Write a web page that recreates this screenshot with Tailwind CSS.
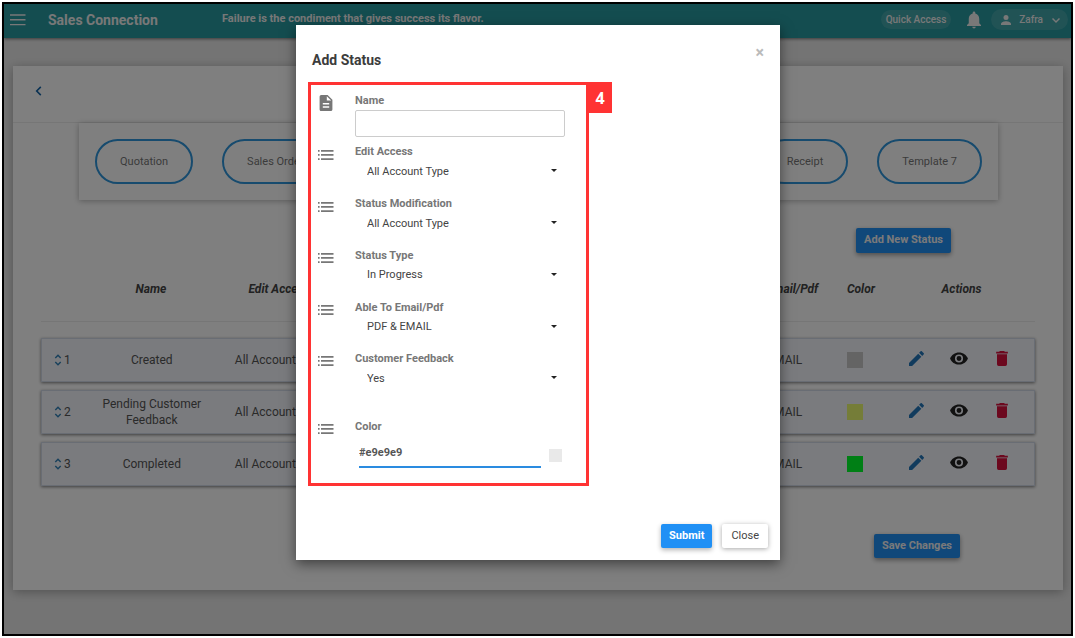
<!DOCTYPE html>
<html lang="en">
<head>
<meta charset="utf-8">
<meta name="viewport" content="width=device-width, initial-scale=1">
<title>Sales Connection</title>
<script src="https://cdn.jsdelivr.net/npm/@tailwindcss/browser@4"></script>
</head>
<body class="bg-white font-[Roboto,sans-serif]">
<svg class="hidden" aria-hidden="true">
  <symbol id="list" viewBox="0 0 16 16"><path fill="currentColor" d="M0 3h1.600v1.700H0zM3 3h12.500v1.700H3zM0 7.100h1.600v1.700H0zM3 7.100h12.500v1.700H3zM0 11.200h1.600v1.700H0zM3 11.200h12.500v1.700H3z"/></symbol>
  <symbol id="caret" viewBox="0 0 6 3"><path fill="currentColor" d="M0 0h6L3 3z"/></symbol>
  <symbol id="sort" viewBox="0 0 8 12"><path fill="none" stroke="currentColor" stroke-width="1.400" d="M1.300 4 4 1.300 6.700 4M1.300 8 4 10.700 6.700 8"/></symbol>
  <symbol id="pencil" viewBox="3 3 18 18"><path fill="currentColor" d="M3 17.250V21h3.750L17.810 9.940l-3.750-3.750L3 17.250zM20.710 7.040a1 1 0 0 0 0-1.410l-2.340-2.340a1 1 0 0 0-1.410 0l-1.830 1.830 3.750 3.750 1.830-1.830z"/></symbol>
  <symbol id="eye" viewBox="1 4 22 16"><path fill="currentColor" d="M12 4.500C7 4.500 2.730 7.610 1 12c1.730 4.390 6 7.500 11 7.500s9.270-3.110 11-7.500c-1.730-4.390-6-7.500-11-7.500zM12 17a5 5 0 1 1 0-10 5 5 0 0 1 0 10zm0-8a3 3 0 1 0 0 6 3 3 0 0 0 0-6z"/></symbol>
  <symbol id="trash" viewBox="5 3 14 18"><path fill="currentColor" d="M6 19a2 2 0 0 0 2 2h8a2 2 0 0 0 2-2V7H6v12zM19 4h-3.500l-1-1h-5l-1 1H5v2h14V4z"/></symbol>
</svg>

<div class="flex min-h-screen p-[2px]">
<div class="relative flex grow flex-col border-2 border-black bg-[#e9e9e9]">

  <header class="flex h-[34px] items-center bg-[#289aa0] pr-[3px] pb-[3px] pl-[6px] text-[#f0f0f0] shadow-[0_1px_3px_rgba(0,0,0,0.5)]">
    <button type="button" aria-label="Menu"><svg class="block h-4 w-4" viewBox="0 0 16 16" stroke="currentColor" stroke-width="1.400"><path d="M0 3h15.500M0 7.800h15.500M0 12.600h15.500"/></svg></button>
    <h1 class="ml-[22px] w-[174px] text-sm font-bold">Sales Connection</h1>
    <p class="text-[11px] font-bold">Failure is the condiment that gives success its flavor.</p>
    <button type="button" class="mr-4 ml-auto h-[19px] rounded-full bg-white/12 px-[5px] text-[10px] font-medium">Quick Access</button>
    <button type="button" aria-label="Notifications" class="mr-[10px]"><svg class="block h-[18px] w-[14px]" viewBox="4 2.500 16 19.500" fill="currentColor"><path d="M12 22a2 2 0 0 0 2-2h-4a2 2 0 0 0 2 2zm6-6v-5c0-3.070-1.640-5.640-4.500-6.320V4a1.500 1.500 0 0 0-3 0v.680C7.630 5.360 6 7.920 6 11v5l-2 2v1h16v-1l-2-2z"/></svg></button>
    <button type="button" class="flex h-[21px] items-center rounded-full bg-white/12 pr-2 pl-[10px] text-[10px] font-medium">
      <svg class="mr-2 h-[10px] w-[10px]" viewBox="4 4 16 16" fill="currentColor"><circle cx="12" cy="8" r="4"/><path d="M12 14c-2.670 0-8 1.340-8 4v2h16v-2c0-2.660-5.330-4-8-4z"/></svg>
      Zafra
      <svg class="ml-[9px] h-2 w-2" viewBox="0 0 8 8" fill="none" stroke="currentColor" stroke-width="1.500"><path d="M.500 2.500 4 6l3.500-3.500"/></svg>
    </button>
  </header>

  <main class="mt-7 mr-2 mb-11 ml-[9px] bg-white pb-8 shadow-[0_2px_10px_rgba(0,0,0,0.3)]">
    <div class="flex h-[57px] items-center border-b border-[#ececec] pl-[22px] text-[#1565a8]">
      <button type="button" aria-label="Back"><svg class="mt-[-6px] block h-[10px] w-2" viewBox="0 0 8 10" fill="none" stroke="currentColor" stroke-width="1.600"><path d="M5.800.900 1.700 5l4.100 4.100"/></svg></button>
    </div>
    <nav aria-label="Templates" class="mr-[65px] ml-[66px] flex justify-between bg-white p-4 text-[11px] text-[#777] shadow-[0_1px_6px_rgba(0,0,0,0.3)]">
      <div class="flex gap-[29px]">
        <button type="button" class="h-[45px] rounded-full border-2 border-[#2f96dc] px-[23px] pt-[2px]">Quotation</button>
        <button type="button" class="h-[45px] rounded-full border-2 border-[#2f96dc] px-[23px] pt-[2px]">Sales Order</button>
      </div>
      <div class="flex gap-[29px]">
        <button type="button" class="h-[45px] rounded-full border-2 border-[#2f96dc] px-[23px] pt-[2px]">Receipt</button>
        <button type="button" class="h-[45px] rounded-full border-2 border-[#2f96dc] px-[23px] pt-[2px]">Template 7</button>
      </div>
    </nav>

    <div class="mt-7 flex justify-end pr-28">
      <button type="button" class="h-[25px] rounded-[2px] bg-[#2090f5] px-2 text-[11px] font-bold text-[#f4f4f4] shadow-[0_2px_5px_rgba(0,0,0,0.4)]">Add New Status</button>
    </div>

    <table class="mx-7 block text-xs text-[#555]">
      <thead class="block">
        <tr class="grid h-[69px] grid-cols-[46fr_128fr_128fr_183fr_183fr_125fr_54fr_147fr] items-center border-b border-[#ececec] pt-1 text-center font-bold whitespace-nowrap text-[#444] italic">
          <td></td><th scope="col">Name</th><th scope="col">Edit Access</th><th scope="col">Status Modification</th><th scope="col">Status Type</th><th scope="col">Able To Email/Pdf</th><th scope="col">Color</th><th scope="col">Actions</th>
        </tr>
      </thead>
      <tbody class="mt-4 flex flex-col gap-2 text-center">
        <tr class="grid h-11 grid-cols-[46fr_128fr_128fr_183fr_183fr_125fr_54fr_147fr] items-center border border-[#d3dbe8] bg-[#f4f6fc] shadow-[0_1px_3px_rgba(0,0,0,0.5)]">
          <td class="flex items-center gap-[2px] pl-3"><svg class="h-3 w-2 text-[#2f80b8]"><use href="#sort"/></svg>1</td><td class="px-2">Created</td><td>All Account Type</td><td>All Account Type</td><td>In Progress</td><td class="pr-2">PDF &amp; EMAIL</td><td class="pl-[14px]"><div class="h-4 w-4 bg-[#c9c9c9]"></div></td>
          <td class="mb-1 flex items-center justify-center text-[#222]"><button type="button" aria-label="Edit" class="mr-[26px] ml-[-4px] text-[#2277bb]"><svg class="block h-[15px] w-[15px]"><use href="#pencil"/></svg></button><button type="button" aria-label="View" class="mr-7"><svg class="block h-[13px] w-[18px]"><use href="#eye"/></svg></button><button type="button" aria-label="Delete" class="text-[#d8103c]"><svg class="block h-[15px] w-3"><use href="#trash"/></svg></button></td>
        </tr>
        <tr class="grid h-11 grid-cols-[46fr_128fr_128fr_183fr_183fr_125fr_54fr_147fr] items-center border border-[#d3dbe8] bg-[#f4f6fc] shadow-[0_1px_3px_rgba(0,0,0,0.5)]">
          <td class="flex items-center gap-[2px] pl-3"><svg class="h-3 w-2 text-[#2f80b8]"><use href="#sort"/></svg>2</td><td class="px-2">Pending Customer Feedback</td><td>All Account Type</td><td>All Account Type</td><td>In Progress</td><td class="pr-2">PDF &amp; EMAIL</td><td class="pl-[14px]"><div class="h-4 w-4 bg-[#eafa70]"></div></td>
          <td class="mb-1 flex items-center justify-center text-[#222]"><button type="button" aria-label="Edit" class="mr-[26px] ml-[-4px] text-[#2277bb]"><svg class="block h-[15px] w-[15px]"><use href="#pencil"/></svg></button><button type="button" aria-label="View" class="mr-7"><svg class="block h-[13px] w-[18px]"><use href="#eye"/></svg></button><button type="button" aria-label="Delete" class="text-[#d8103c]"><svg class="block h-[15px] w-3"><use href="#trash"/></svg></button></td>
        </tr>
        <tr class="grid h-11 grid-cols-[46fr_128fr_128fr_183fr_183fr_125fr_54fr_147fr] items-center border border-[#d3dbe8] bg-[#f4f6fc] shadow-[0_1px_3px_rgba(0,0,0,0.5)]">
          <td class="flex items-center gap-[2px] pl-3"><svg class="h-3 w-2 text-[#2f80b8]"><use href="#sort"/></svg>3</td><td class="px-2">Completed</td><td>All Account Type</td><td>All Account Type</td><td>In Progress</td><td class="pr-2">PDF &amp; EMAIL</td><td class="pl-[14px]"><div class="h-4 w-4 bg-[#00ff2a]"></div></td>
          <td class="mb-1 flex items-center justify-center text-[#222]"><button type="button" aria-label="Edit" class="mr-[26px] ml-[-4px] text-[#2277bb]"><svg class="block h-[15px] w-[15px]"><use href="#pencil"/></svg></button><button type="button" aria-label="View" class="mr-7"><svg class="block h-[13px] w-[18px]"><use href="#eye"/></svg></button><button type="button" aria-label="Delete" class="text-[#d8103c]"><svg class="block h-[15px] w-3"><use href="#trash"/></svg></button></td>
        </tr>
      </tbody>
    </table>

    <div class="mt-12 flex justify-end pr-[103px]">
      <button type="button" class="h-6 rounded-[2px] bg-[#2090f5] px-2 text-[11px] font-bold text-[#f4f4f4] shadow-[0_2px_5px_rgba(0,0,0,0.4)]">Save Changes</button>
    </div>
  </main>

  <!-- Dialog over the dimmed page -->
  <div class="absolute inset-0 flex items-start justify-center bg-black/50 pt-[21px] pl-px">
    <form role="dialog" aria-labelledby="dialog-title" class="w-[484px] bg-white px-3 pb-3 shadow-[0_4px_12px_rgba(0,0,0,0.5)]">
      <div class="flex h-[57px] items-start justify-between pt-[18px] pr-1 pl-1">
        <h2 id="dialog-title" class="mt-[7px] text-sm font-bold text-[#3c3c3c]">Add Status</h2>
        <button type="button" aria-label="Close dialog" class="text-base leading-5 font-bold text-[#bbb]">×</button>
      </div>

      <div class="relative w-[281px] border-3 border-[#ff3333] pt-2 pr-[21px] pb-[15px] pl-[7px] text-[#777]">
        <span class="absolute -top-[3px] left-full flex h-[31px] w-[26px] items-center justify-center bg-[#ff3333] pl-[2px] font-['Open_Sans',sans-serif] text-base font-bold text-white">4</span>

        <div class="grid h-[51px] grid-cols-[37px_1fr]">
          <svg class="mt-[2px] ml-px h-4 w-[14px]" viewBox="4 2 16 20" fill="currentColor"><path d="M14 2H6a2 2 0 0 0-2 2v16c0 1.100.900 2 2 2h12a2 2 0 0 0 2-2V8l-6-6zm2 16H8v-2h8v2zm0-4H8v-2h8v2zm-3-5V3.500L18.500 9H13z"/></svg>
          <div>
            <label for="name" class="block text-[11px] leading-4 font-bold">Name</label>
            <input id="name" type="text" class="mt-px block h-[27px] w-full rounded-[2px] border border-[#ccc] px-2 text-[11px] text-[#444]">
          </div>
        </div>

        <div class="grid h-[52px] grid-cols-[37px_1fr]">
          <svg class="mt-[3px] h-4 w-4"><use href="#list"/></svg>
          <div class="relative">
            <label for="edit" class="block text-[11px] leading-4 font-bold">Edit Access</label>
            <select id="edit" class="mt-[2px] block h-5 w-full appearance-none pl-3 text-[11px] text-[#444]"><option>All Account Type</option></select>
            <svg class="pointer-events-none absolute top-[25px] right-2 h-[3px] w-[6px] text-[#222]"><use href="#caret"/></svg>
          </div>
        </div>
        <div class="grid h-[52px] grid-cols-[37px_1fr]">
          <svg class="mt-[3px] h-4 w-4"><use href="#list"/></svg>
          <div class="relative">
            <label for="modification" class="block text-[11px] leading-4 font-bold">Status Modification</label>
            <select id="modification" class="mt-[2px] block h-5 w-full appearance-none pl-3 text-[11px] text-[#444]"><option>All Account Type</option></select>
            <svg class="pointer-events-none absolute top-[25px] right-2 h-[3px] w-[6px] text-[#222]"><use href="#caret"/></svg>
          </div>
        </div>
        <div class="grid h-[52px] grid-cols-[37px_1fr]">
          <svg class="mt-[2px] h-4 w-4"><use href="#list"/></svg>
          <div class="relative">
            <label for="type" class="block text-[11px] leading-4 font-bold">Status Type</label>
            <select id="type" class="mt-px block h-5 w-full appearance-none pl-3 text-[11px] text-[#444]"><option>In Progress</option></select>
            <svg class="pointer-events-none absolute top-[25px] right-2 h-[3px] w-[6px] text-[#222]"><use href="#caret"/></svg>
          </div>
        </div>
        <div class="grid h-[51px] grid-cols-[37px_1fr]">
          <svg class="mt-[2px] h-4 w-4"><use href="#list"/></svg>
          <div class="relative">
            <label for="output" class="block text-[11px] leading-4 font-bold">Able To Email/Pdf</label>
            <select id="output" class="mt-px block h-5 w-full appearance-none pl-3 text-[11px] text-[#444]"><option>PDF &amp; EMAIL</option></select>
            <svg class="pointer-events-none absolute top-[25px] right-2 h-[3px] w-[6px] text-[#222]"><use href="#caret"/></svg>
          </div>
        </div>
        <div class="grid h-[52px] grid-cols-[37px_1fr]">
          <svg class="mt-[2px] h-4 w-4"><use href="#list"/></svg>
          <div class="relative">
            <label for="feedback" class="block text-[11px] leading-4 font-bold">Customer Feedback</label>
            <select id="feedback" class="mt-[2px] block h-5 w-full appearance-none pl-3 text-[11px] text-[#444]"><option>Yes</option></select>
            <svg class="pointer-events-none absolute top-[25px] right-2 h-[3px] w-[6px] text-[#222]"><use href="#caret"/></svg>
          </div>
        </div>

        <div class="mt-4 grid grid-cols-[37px_1fr]">
          <svg class="mt-[2px] h-4 w-4"><use href="#list"/></svg>
          <div>
            <label for="color" class="block text-[11px] leading-4 font-bold">Color</label>
            <div class="mt-[3px] flex items-center pr-1 pl-1">
              <input id="color" type="text" value="#e9e9e9" class="block h-[30px] w-[182px] border-b-2 border-[#2a8be0] text-[11px] font-bold text-[#555]">
              <div class="mt-1 ml-2 h-[13px] w-[13px] bg-[#e9e9e9]"></div>
            </div>
          </div>
        </div>
      </div>

      <div class="mt-[38px] flex justify-end gap-[10px] text-[11px]">
        <button type="submit" class="h-6 rounded-[2px] bg-[#2090f5] px-2 font-bold text-white shadow-[0_2px_5px_rgba(0,0,0,0.3)]">Submit</button>
        <button type="button" class="h-6 rounded-[2px] bg-white px-[9px] text-[#444] shadow-[0_1px_5px_rgba(0,0,0,0.35)]">Close</button>
      </div>
    </form>
  </div>
</div>
</div>
</body>
</html>
